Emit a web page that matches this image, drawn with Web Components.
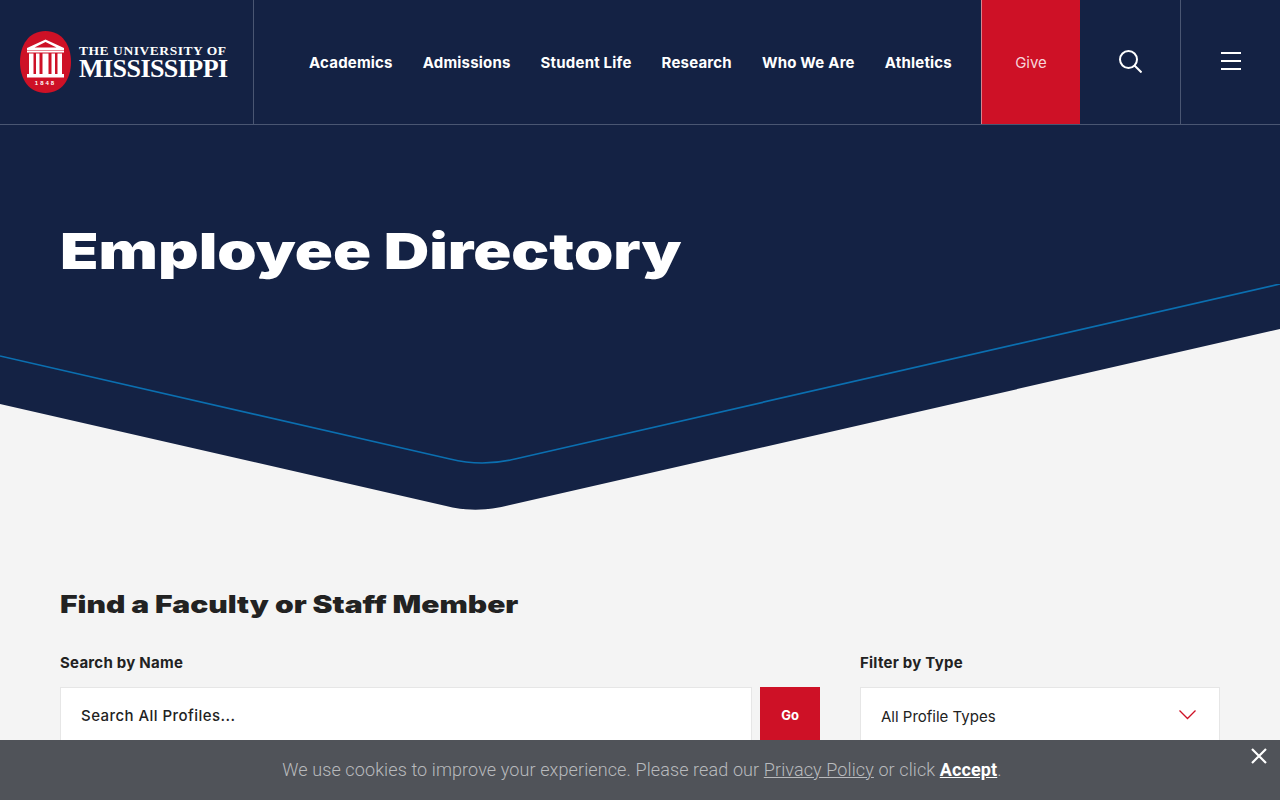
<!DOCTYPE html>
<html lang="en">
<head>
<meta charset="utf-8">
<title>Employee Directory</title>
<style>
    html, body { margin: 0; height: 800px; overflow: hidden; background: #f4f4f4; }
    body { font-family: "Inter", "Noto Sans", sans-serif; color: #222; }
</style>
</head>
<body>
<um-header></um-header>
<um-hero titulo="Employee Directory"></um-hero>
<um-directory></um-directory>
<um-cookies></um-cookies>

<script>
class UmLogo extends HTMLElement {
    constructor() {
        super();
        this.attachShadow({ mode: 'open' });
    }
    connectedCallback() {
        this.shadowRoot.innerHTML = `
            <style>
                :host { display: flex; align-items: center; gap: 8px; }
                svg { display: block; flex: none; overflow: visible; }
                .letras { display: flex; flex-direction: column; color: #fff; font-family: "Liberation Serif", serif; font-weight: 700; white-space: nowrap; }
                .uni { font-size: 13.5px; line-height: 13px; letter-spacing: 0.55px; }
                .mis { font-size: 26px; line-height: 24px; letter-spacing: -0.55px; }
            </style>
            <svg width="51" height="62" viewBox="0 0 51 62">
                <path d="M25.5 0C42 0 51 14 51 31S42 62 25.5 62 0 48 0 31 9 0 25.500 0Z" fill="#ce1126"/>
                <path d="M25.5 8.500 44 17v2H7v-2ZM25.5 11 14.500 16.500h22Z" fill="#fff" fill-rule="evenodd"/>
                <path d="M7 19.500h37v2H7ZM9 22.500h4.500V43H9ZM16 22.500h3.500V43H16ZM22.500 22.500h6V43h-6ZM31.500 22.500h3.500V43h-3.500ZM37.500 22.500H42V43h-4.500ZM7 43h37v3.500H7Z" fill="#fff"/>
                <text x="25.500" y="54" text-anchor="middle" font-family="Liberation Sans, sans-serif" font-size="6" font-weight="700" letter-spacing="2" fill="#fff">1848</text>
            </svg>
            <div class="letras"><span class="uni">THE UNIVERSITY OF</span><span class="mis">MISSISSIPPI</span></div>
        `;
    }
}
customElements.define('um-logo', UmLogo);

class UmHeader extends HTMLElement {
    constructor() {
        super();
        this.attachShadow({ mode: 'open' });
    }
    connectedCallback() {
        const enlaces = ['Academics', 'Admissions', 'Student Life', 'Research', 'Who We Are', 'Athletics'];
        this.shadowRoot.innerHTML = `
            <style>
                :host { display: flex; height: 124px; background: #142244; border-bottom: 1px solid #4a5672; font-family: "Inter", "Noto Sans", sans-serif; }
                .marca { width: 254px; box-sizing: border-box; border-right: 1px solid #4a5672; padding-left: 20px; display: flex; align-items: center; }
                nav { flex: 1; display: flex; align-items: center; gap: 30px; padding-left: 55px; }
                nav a { color: #fff; font-size: 15px; font-weight: 700; letter-spacing: .2px; text-decoration: none; white-space: nowrap; }
                .give { width: 99px; box-sizing: border-box; background: #ce1126; border-left: 1px solid #d8848e; display: flex; align-items: center; justify-content: center; color: #f6d5d9; font-size: 15px; }
                .boton { width: 101px; box-sizing: border-box; display: flex; align-items: center; justify-content: center; padding-bottom: 2px; }
                .boton.linea { border-right: 1px solid #4a5672; }
                .boton.final { width: 99px; }
            </style>
            <div class="marca"><um-logo></um-logo></div>
            <nav>${enlaces.map(e => `<a href="#">${e}</a>`).join('')}</nav>
            <a class="give">Give</a>
            <div class="boton linea">
                <svg width="24" height="23" viewBox="0 0 24 23" fill="none" stroke="#fff" stroke-width="2"><circle cx="10.500" cy="9.500" r="8.500"/><path d="M16.500 15.500l7 7"/></svg>
            </div>
            <div class="boton final">
                <svg width="20" height="18" viewBox="0 0 20 18" fill="none" stroke="#fff" stroke-width="2"><path d="M0 1h20M0 9h20M0 17h20"/></svg>
            </div>
        `;
    }
}
customElements.define('um-header', UmHeader);

class UmHero extends HTMLElement {
    constructor() {
        super();
        this.attachShadow({ mode: 'open' });
    }
    connectedCallback() {
        this.shadowRoot.innerHTML = `
            <style>
                :host { display: block; }
                .azul { background: #142244; height: 159px; padding: 0 60px; box-sizing: border-box; }
                h1 { margin: 0; padding-top: 95px; color: #fff; font: 900 50px/62px "Inter", sans-serif; white-space: nowrap; transform-origin: left; transform: scaleX(1.26); width: max-content; }
                svg { display: block; }
            </style>
            <div class="azul"><h1>${this.getAttribute('titulo')}</h1></div>
            <svg width="1280" height="231" viewBox="0 284 1280 231">
                <path d="M0 284H1280V329L510 505Q476 514 445 505.700L0 404Z" fill="#142244"/>
                <path d="M0 356 450 459Q482 467 515 459L1280 284" fill="none" stroke="#0b6fb0" stroke-width="1.700"/>
            </svg>
        `;
    }
}
customElements.define('um-hero', UmHero);

class UmDirectory extends HTMLElement {
    constructor() {
        super();
        this.attachShadow({ mode: 'open' });
    }
    connectedCallback() {
        this.shadowRoot.innerHTML = `
            <style>
                :host { display: block; padding: 72px 60px 0; font-family: "Inter", "Noto Sans", sans-serif; color: #222; }
                h2 { margin: 0 0 30px; font: 900 24px/36px "Inter", sans-serif; white-space: nowrap; transform-origin: left; transform: scaleX(1.25); width: max-content; }
                .filas { display: grid; grid-template-columns: 760px 360px; gap: 40px; }
                label { display: block; font-size: 15px; font-weight: 700; letter-spacing: .25px; line-height: 20px; margin-bottom: 14px; }
                .buscar { display: flex; gap: 8px; }
                .campo { flex: 1; height: 60px; box-sizing: border-box; background: #fff; border: 1px solid #e6e6e6; padding: 0 20px 4px; display: flex; align-items: center; font-size: 15px; font-weight: 500; letter-spacing: .45px; }
                .go { width: 60px; height: 60px; padding-bottom: 4px; box-sizing: border-box; background: #ce1126; color: #fff; font-size: 13px; font-weight: 700; display: flex; align-items: center; justify-content: center; }
                .tipo { justify-content: space-between; font-weight: 400; letter-spacing: 0; padding: 0 23px 2px 20px; }
                .tipo svg { margin-bottom: 2px; }
            </style>
            <h2>Find a Faculty or Staff Member</h2>
            <div class="filas">
                <div>
                    <label>Search by Name</label>
                    <div class="buscar"><div class="campo">Search All Profiles...</div><div class="go">Go</div></div>
                </div>
                <div>
                    <label>Filter by Type</label>
                    <div class="campo tipo"><span>All Profile Types</span>
                        <svg width="17" height="10" viewBox="0 0 17 10" fill="none" stroke="#ce1126" stroke-width="1.300"><path d="M.5.5l8 8 8-8"/></svg>
                    </div>
                </div>
            </div>
        `;
    }
}
customElements.define('um-directory', UmDirectory);

class UmCookies extends HTMLElement {
    constructor() {
        super();
        this.attachShadow({ mode: 'open' });
    }
    connectedCallback() {
        this.shadowRoot.innerHTML = `
            <style>
                :host { position: fixed; left: 0; right: 0; bottom: 0; height: 60px; background: #505359; display: flex; align-items: center; justify-content: center; padding: 0 0 2px 4px; box-sizing: border-box; color: #b8babd; font: 300 18px "Roboto", "Noto Sans", sans-serif; letter-spacing: .11px; white-space: nowrap; }
                a { color: inherit; }
                a.aceptar { color: #fff; font-weight: 700; }
                svg { position: absolute; right: 13px; top: 8px; }
            </style>
            <span>We use cookies to improve your experience. Please read our <a href="#">Privacy Policy</a> or click <a class="aceptar" href="#">Accept</a>.</span>
            <svg width="16" height="16" viewBox="0 0 16 16" fill="none" stroke="#fff" stroke-width="2.200"><path d="M1 1l14 14M15 1 1 15"/></svg>
        `;
    }
}
customElements.define('um-cookies', UmCookies);
</script>
</body>
</html>
